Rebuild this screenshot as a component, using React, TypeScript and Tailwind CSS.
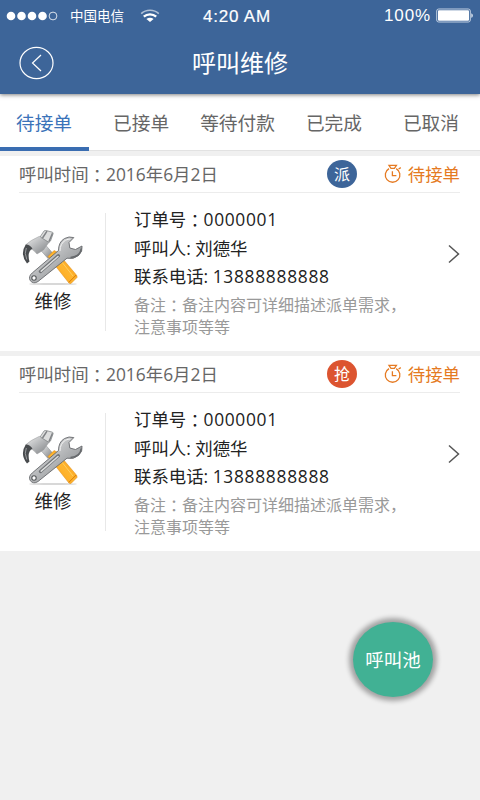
import clsx from "clsx";

const tabs = [
  { label: "待接单", left: "ml-4" },
  { label: "已接单", left: "ml-[41px]" },
  { label: "等待付款", left: "ml-[31px]" },
  { label: "已完成", left: "ml-[31px]" },
  { label: "已取消", left: "ml-[41px]" },
];

const orders = [
  { id: 1, time: "2016年6月2日", tag: "派", tagColor: "bg-[#3d6599]", no: "0000001", name: "刘德华", phone: "13888888888" },
  { id: 2, time: "2016年6月2日", tag: "抢", tagColor: "bg-[#dc5430]", no: "0000001", name: "刘德华", phone: "13888888888" },
];

// full width colon, centred in its cell
function Colon() {
  return <span className="relative top-px font-['Noto_Sans_CJK_TC',sans-serif]">：</span>;
}

function StatusBar() {
  return (
    <div className="flex h-8 items-center text-white font-['Liberation_Sans','Noto_Sans_CJK_SC',sans-serif]">
      <svg className="ml-[6px] h-[10px] w-[52px] shrink-0" viewBox="0 0 52 10" fill="#fff">
        <circle cx="5" cy="5" r="4.3" />
        <circle cx="15.5" cy="5" r="4.3" />
        <circle cx="26" cy="5" r="4.3" />
        <circle cx="36.5" cy="5" r="4.3" />
        <circle cx="47" cy="5" r="3.9" fill="none" stroke="#fff" strokeWidth="0.8" />
      </svg>
      <span className="ml-3 w-[54px] pt-0.5 text-[13.5px] whitespace-nowrap leading-8">中国电信</span>
      <svg className="ml-4 h-[14px] w-5 shrink-0" viewBox="0 0 20 14" fill="none" stroke="#fff">
        <path d="M1.2 4.6C6 .2 14 .2 18.8 4.6" strokeWidth="1.6" opacity="0.6" />
        <path d="M3.8 7.7C7.2 4.5 12.8 4.5 16.2 7.7" strokeWidth="2.3" />
        <path d="M10 13L6.4 10C8.5 8.2 11.5 8.2 13.6 10Z" fill="#fff" stroke="none" />
      </svg>
      <span className="ml-[43px] w-[68px] pt-0.5 text-[17px] whitespace-nowrap tracking-[0.8px] [-webkit-text-stroke:0.2px_white]">4:20 AM</span>
      <span className="ml-[113px] w-[47px] text-[17px] whitespace-nowrap tracking-[0.9px]">100%</span>
      <svg className="ml-[5px] h-[15px] w-[38px] shrink-0 -mt-0.5" viewBox="0 0 38 15">
        <rect x="0.7" y="1" width="33.6" height="13" rx="2" fill="none" stroke="#c2d0e2" strokeWidth="1" />
        <rect x="2" y="2.3" width="31" height="10.4" rx="1" fill="#fff" />
        <path d="M35.3 5.2C37.3 6 37.3 9 35.3 9.8Z" fill="#dfe7f0" />
      </svg>
    </div>
  );
}

function StopwatchIcon() {
  return (
    <svg className="h-[19px] w-[18px]" viewBox="0 0 18 19" fill="none" stroke="#e57a22" strokeWidth="1.3">
      <path d="M12.2 4.6A7.3 7.3 0 1 1 5 4.6" />
      <path d="M5 1.4h7.4L10.4 4.3H7Z" />
      <path d="M8.4 7.2v4.5h4M14.6 5L16.8 3.6" />
    </svg>
  );
}

function ToolsIcon({ id }: { id: number }) {
  return (
    <svg className="h-[57px] w-[62px]" viewBox="0 0 62 57">
      <defs>
        <linearGradient id={"steel" + id} x1="0" y1="0" x2="1" y2="1">
          <stop offset="0" stopColor="#f0f0f0" />
          <stop offset="0.5" stopColor="#b4b6b8" />
          <stop offset="1" stopColor="#7a7d80" />
        </linearGradient>
        <linearGradient id={"grip" + id} x1="0" y1="1" x2="1" y2="0">
          <stop offset="0" stopColor="#f59a12" />
          <stop offset="0.5" stopColor="#ffb52e" />
          <stop offset="1" stopColor="#f3961a" />
        </linearGradient>
      </defs>
      <ellipse cx="31" cy="54" rx="24" ry="1" fill="#d8d8d8" />
      {/* hammer */}
      <path d="M18 19.5L23.5 15L31 23.5L26 28.5Z" fill={"url(#steel" + id + ")"} stroke="#85888a" strokeWidth="0.5" />
      <path d="M32 20.5L26 26.5L46.5 52.5Q48 54.5 49.5 53L55 47.5Q55.5 46 54 44.5L35 22Z" fill={"url(#grip" + id + ")"} stroke="#dc8a18" strokeWidth="0.5" />
      <path d="M35 26L51 46" stroke="#ffcf60" strokeWidth="1" />
      <path d="M46.8 52.4L54.2 45" stroke="#d67a0c" strokeWidth="1" />
      <path d="M17 6.5L21 6L28 11L25 15L21.5 20L15 24Q11 18.5 5.5 18L3.5 15Q8 10.5 17 6.5Z" fill={"url(#steel" + id + ")"} stroke="#97999b" strokeWidth="0.5" />
      <path d="M3.8 14.5Q7 14 10.5 18.5Q4.8 22 7.5 31.5L5 33.6Q-2.5 24 3.8 14.5Z" fill="#484b4e" />
      <path d="M4.3 18Q2 23 4.8 29.5" fill="none" stroke="#a5a7a9" strokeWidth="0.9" />
      <path d="M22 1Q23 0 24.5 .6L30.5 2.2Q31.5 3 31 4L28.5 11Q27.5 12.5 26 11.8L19 7.5Q18 6.5 19 5.5Z" fill="#dcdddd" stroke="#797c7e" strokeWidth="0.7" />
      <path d="M25 1.2L20.5 8M30.5 3.2L27 11.5" stroke="#808386" strokeWidth="1.5" />
      {/* wrench */}
      <path d="M36.5 20.5Q36.5 12 42.5 8.5Q47 6 51.8 7.6L47 12.5L47.8 18L53.5 19.5L60 16Q61 21.5 56.5 25.5Q51.5 29.8 45 28.2L16 51.5Q11.5 54.5 8.3 50.7Q6 46.5 10.2 43Z" fill={"url(#steel" + id + ")"} stroke="#66696c" strokeWidth="0.9" />
      <path d="M38 21Q38 13.5 43.5 10.2Q46 9 48.5 9" fill="none" stroke="#f4f4f4" strokeWidth="1" />
      <path d="M36.3 25.8L18.5 41.5" stroke="#6f7275" strokeWidth="3.4" strokeLinecap="round" />
      <path d="M36 26.5L19.2 41.2" stroke="#dcdddd" strokeWidth="1.6" strokeLinecap="round" />
      <path d="M59.2 18.5Q58.5 26.5 48.5 27.6" fill="none" stroke="#66696c" strokeWidth="1.5" />
      <circle cx="12" cy="48" r="2.2" fill="#fff" stroke="#56595b" strokeWidth="1.1" />
    </svg>
  );
}

function OrderCard({ order }: { order: (typeof orders)[number] }) {
  return (
    <section className="h-[195px] bg-white pl-[19px] pr-5">
      <div className="flex h-[37px] items-center border-b border-[#ececec] text-[17.4px] text-[#666]">
        <p className="w-[308px] pt-px whitespace-nowrap">呼叫时间<Colon />{order.time}</p>
        <span className={clsx("flex h-[28px] w-[30px] shrink-0 items-center justify-center rounded-[50%] text-base text-white", order.tagColor)}>
          {order.tag}
        </span>
        <div className="ml-auto flex items-center text-[#e57a22]">
          <StopwatchIcon />
          <span className="ml-[6px] pt-px whitespace-nowrap">待接单</span>
        </div>
      </div>
      <div className="flex h-[158px]">
        <div className="mt-5 flex h-[118px] w-[87px] flex-col border-r border-[#e8e8e8] pl-[3px] pt-[17px]">
          <ToolsIcon id={order.id} />
          <span className="w-[62px] text-center text-[18.5px] leading-7 text-[#222]">维修</span>
        </div>
        <div className="ml-7 w-[290px] pt-3 text-[17.4px] leading-[28.5px] text-[#222] whitespace-nowrap">
          <p>订单号<Colon /><span className="tracking-[0.65px]">{order.no}</span></p>
          <p>呼叫人: {order.name}</p>
          <p>联系电话: <span className="tracking-[0.7px]">{order.phone}</span></p>
          <p className="pt-0.5 text-base leading-[22.5px] text-[#999]">
            备注<Colon />备注内容可详细描述派单需求，<br />注意事项等等
          </p>
        </div>
        <svg className="ml-auto mt-[51px] h-5 w-3" viewBox="0 0 12 20" fill="none" stroke="#555" strokeWidth="1.5">
          <path d="M1 1.5L10.5 10L1 18.5" />
        </svg>
      </div>
    </section>
  );
}

export default function App() {
  return (
    <div className="relative h-[800px] w-[480px] overflow-hidden bg-[#f0f0f0] font-['Open_Sans','Noto_Sans_CJK_SC',sans-serif]">
      <header className="relative z-10 h-[94px] bg-[#3d6599] shadow-[0_1px_4px_rgba(0,0,0,0.5)]">
        <StatusBar />
        <div className="grid h-[62px] grid-cols-[1fr_auto_1fr] items-center px-[19px]">
          <svg className="h-[34px] w-[36px]" viewBox="0 0 36 34" fill="none" stroke="#fff" strokeWidth="1.2">
            <ellipse cx="17.5" cy="17" rx="16.5" ry="15.6" />
            <path d="M22 9L13.5 17L22 25" />
          </svg>
          <h1 className="text-2xl text-white">呼叫维修</h1>
        </div>
      </header>

      <nav className="relative flex h-[57px] border-b border-[#e2e2e2] bg-white text-[18.7px] leading-[57px] text-[#666]">
        {tabs.map((tab, i) => (
          <a key={tab.label} className={clsx("whitespace-nowrap", tab.left, i === 0 && "text-[#3b73b9]")}>{tab.label}</a>
        ))}
        <div className="absolute -bottom-px left-0 h-1 w-[89px] bg-[#3a6db1]"></div>
      </nav>

      <main className="flex flex-col gap-[5px] pt-[5px]">
        {orders.map((order) => (
          <OrderCard key={order.id} order={order} />
        ))}
      </main>

      <button className="absolute left-[353px] top-[622px] h-[75px] w-[80px] rounded-[50%] bg-[#41b194] text-[18.5px] text-white shadow-[0_0_5px_4px_rgba(0,0,0,0.33)] whitespace-nowrap">
        呼叫池
      </button>
    </div>
  );
}
